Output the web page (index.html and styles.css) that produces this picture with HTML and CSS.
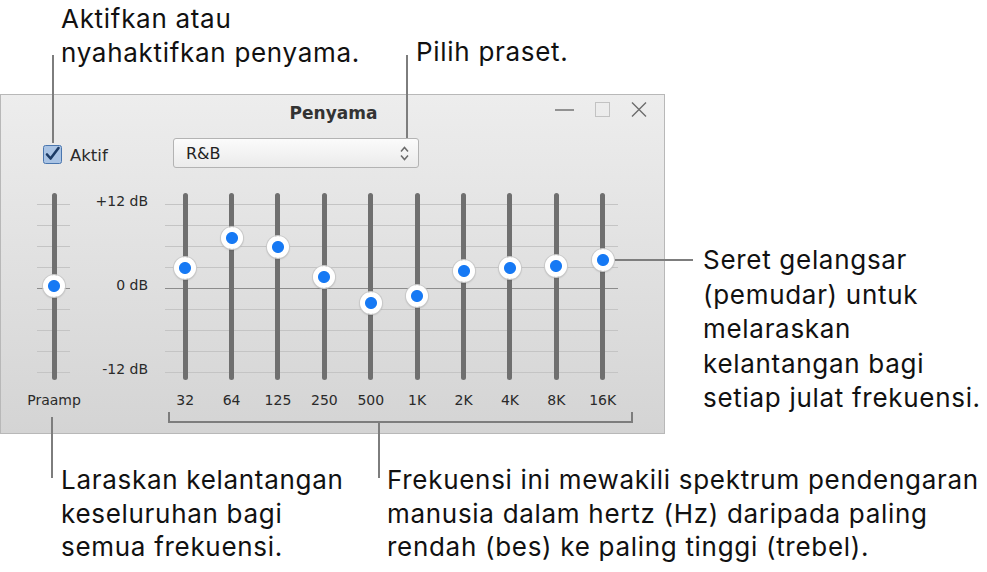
FILE: index.html
```html
<!DOCTYPE html>
<html>

<head>
	<meta charset="utf-8">
	<meta name="viewport" content="width=device-width, initial-scale=1.0">
	<title>Penyama</title>
	<link rel="stylesheet" href="styles.css">
</head>

<body>
	<div class="stage">
		<div class="window">
			<div class="titlebar">
				<span></span>
				<h1>Penyama</h1>
				<div class="controls">
					<svg width="19" height="15" viewBox="0 0 19 15"><path d="M0 8h19" stroke="#6c6c6c" stroke-width="1.4"/></svg>
					<svg width="15" height="15" viewBox="0 0 15 15"><rect x="0.5" y="0.5" width="14" height="14" fill="none" stroke="#c2c2c2"/></svg>
					<svg width="16" height="15" viewBox="0 0 16 15"><path d="M1 0.5l14 14M15 0.5l-14 14" stroke="#6c6c6c" stroke-width="1.4"/></svg>
				</div>
			</div>

			<div class="toolbar">
				<label class="enable">
					<svg width="19" height="19" viewBox="0 0 19 19">
						<rect x="0.5" y="0.5" width="18" height="18" rx="2" fill="#a9c3e4" stroke="#4a76ae"/>
						<path d="M4 9.5l3.6 4L15.5 3" fill="none" stroke="#1c3b66" stroke-width="2.6" stroke-linecap="round" stroke-linejoin="round"/>
					</svg>
					<span>Aktif</span>
				</label>
				<div class="select">
					<span>R&amp;B</span>
					<svg width="9" height="15" viewBox="0 0 9 15"><path d="M1 5.5l3.5-4 3.5 4M1 9.5l3.5 4 3.5-4" fill="none" stroke="#6a6a6a" stroke-width="1.5"/></svg>
				</div>
			</div>

			<div class="eq">
				<div class="band preamp">
					<div class="rail"><span class="knob" style="top: 82px"></span></div>
					<span class="freq">Praamp</span>
				</div>
				<div class="scale">
					<span>+12 dB</span>
					<span>0 dB</span>
					<span>-12 dB</span>
				</div>
				<div class="bands">
					<div class="band">
						<div class="rail"><span class="knob" style="top: 64px"></span></div>
						<span class="freq">32</span>
					</div>
					<div class="band">
						<div class="rail"><span class="knob" style="top: 34px"></span></div>
						<span class="freq">64</span>
					</div>
					<div class="band">
						<div class="rail"><span class="knob" style="top: 43px"></span></div>
						<span class="freq">125</span>
					</div>
					<div class="band">
						<div class="rail"><span class="knob" style="top: 73px"></span></div>
						<span class="freq">250</span>
					</div>
					<div class="band">
						<div class="rail"><span class="knob" style="top: 99px"></span></div>
						<span class="freq">500</span>
					</div>
					<div class="band">
						<div class="rail"><span class="knob" style="top: 92px"></span></div>
						<span class="freq">1K</span>
					</div>
					<div class="band">
						<div class="rail"><span class="knob" style="top: 67px"></span></div>
						<span class="freq">2K</span>
					</div>
					<div class="band">
						<div class="rail"><span class="knob" style="top: 64px"></span></div>
						<span class="freq">4K</span>
					</div>
					<div class="band">
						<div class="rail"><span class="knob" style="top: 62px"></span></div>
						<span class="freq">8K</span>
					</div>
					<div class="band">
						<div class="rail"><span class="knob" style="top: 56px"></span></div>
						<span class="freq">16K</span>
					</div>
				</div>
			</div>
		</div>

		<!-- callouts -->
		<p class="note note-enable">Aktifkan atau<br>nyahaktifkan penyama.</p>
		<p class="note note-preset">Pilih praset.</p>
		<p class="note note-drag">Seret gelangsar<br>(pemudar) untuk<br>melaraskan<br>kelantangan bagi<br>setiap julat frekuensi.</p>
		<p class="note note-preamp">Laraskan kelantangan<br>keseluruhan bagi<br>semua frekuensi.</p>
		<p class="note note-freq">Frekuensi ini mewakili spektrum pendengaran<br>manusia dalam hertz (Hz) daripada paling<br>rendah (bes) ke paling tinggi (trebel).</p>

		<span class="line line-enable"></span>
		<span class="line line-preset"></span>
		<span class="line line-drag"></span>
		<span class="line line-preamp"></span>
		<span class="bracket"></span>
		<span class="line line-freq"></span>
	</div>
</body>

</html>
```

FILE: styles.css
```css
* {
	margin: 0;
	padding: 0;
	box-sizing: border-box;
}

body {
	background: #fff;
	font-family: "DejaVu Sans", sans-serif;
}

.stage {
	position: relative;
	width: 987px;
	height: 572px;
	padding-top: 94px;
	overflow: hidden;
}

/* window */

.window {
	width: 665px;
	height: 340px;
	border: 1px solid #b8b8b8;
	background: linear-gradient(#ededed, #d4d4d4);
	color: #2a2a2a;
}

.titlebar {
	height: 36px;
	display: grid;
	grid-template-columns: 1fr auto 1fr;
	align-items: center;
}

.titlebar h1 {
	font-size: 17px;
	font-weight: 700;
	color: #333;
	padding-left: 2px;
}

.controls {
	justify-self: end;
	align-self: start;
	display: flex;
	gap: 21px;
	padding-top: 7px;
	padding-right: 17px;
}

.toolbar {
	display: flex;
	align-items: center;
	height: 30px;
	margin-top: 7px;
	padding-left: 42px;
}

.enable {
	width: 130px;
	display: flex;
	align-items: center;
	gap: 8px;
	font-size: 16.5px;
	padding-top: 2px;
}

.enable span {
	padding-top: 2px;
}

.select {
	width: 246px;
	height: 30px;
	border: 1px solid #b3b3b3;
	border-radius: 3px;
	background: linear-gradient(#fbfbfb, #ebebeb);
	display: flex;
	align-items: center;
	justify-content: space-between;
	padding: 0 9px 0 12px;
	font-size: 16px;
	color: #222;
}

/* sliders */

.eq {
	display: flex;
	margin-top: 25px;
	padding-left: 36px;
}

.band {
	flex: 0 0 46.4px;
	min-width: 0;
	display: flex;
	flex-direction: column;
	align-items: center;
}

.preamp {
	flex-basis: 34px;
}

.rail {
	position: relative;
	width: 100%;
	height: 187px;
	display: flex;
	justify-content: center;
}

.rail::before {
	content: '';
	width: 5px;
	border-radius: 3px;
	background: #6f6f6f;
}

.preamp .rail {
	background:
		linear-gradient(#8c8c8c, #8c8c8c) 0 95px / 33px 1px no-repeat,
		repeating-linear-gradient(transparent 0 11px, #c4c4c4 11px 12px, transparent 12px 21px) 0 0 / 33px 187px no-repeat;
}

.knob {
	position: absolute;
	left: 50%;
	width: 22px;
	height: 22px;
	margin-left: -11px;
	border-radius: 50%;
	background: radial-gradient(circle, #1679f4 0 5.5px, #fff 6.5px);
	box-shadow: 0 0 0 1px #c9c9c9, 0 1px 2px rgba(0, 0, 0, .25);
}

.freq {
	margin-top: 12px;
	font-size: 14px;
	line-height: 17px;
	white-space: nowrap;
}

.scale {
	flex: 0 0 91px;
	height: 187px;
	display: flex;
	flex-direction: column;
	justify-content: space-between;
	align-items: flex-end;
	padding: 0 14px 3px 0;
	font-size: 14px;
	line-height: 16px;
}

.bands {
	display: flex;
	background:
		linear-gradient(#8c8c8c, #8c8c8c) 3px 95px / 453px 1px no-repeat,
		repeating-linear-gradient(transparent 0 11px, #c4c4c4 11px 12px, transparent 12px 21px) 3px 0 / 453px 187px no-repeat;
}

/* callouts */

.note {
	position: absolute;
	font-family: Inter, sans-serif;
	font-size: 26px;
	letter-spacing: 0.7px;
	line-height: 34px;
	color: #111;
	white-space: nowrap;
}

.note-enable {
	left: 61px;
	top: 2px;
}

.note-preset {
	left: 416px;
	top: 35px;
}

.note-drag {
	left: 703px;
	top: 243px;
	line-height: 34.5px;
}

.note-preamp {
	left: 61px;
	top: 463px;
	line-height: 33.5px;
}

.note-freq {
	left: 387px;
	top: 463px;
	line-height: 33.5px;
}

.line {
	position: absolute;
	background: #7d7d7d;
	width: 2px;
}

.line-enable {
	left: 52px;
	top: 55px;
	height: 88px;
}

.line-preset {
	left: 406px;
	top: 55px;
	height: 83px;
}

.line-drag {
	left: 615px;
	top: 259px;
	width: 78px;
	height: 2px;
}

.line-preamp {
	left: 51px;
	top: 417px;
	height: 61px;
}

.line-freq {
	left: 378px;
	top: 422px;
	height: 56px;
}

.bracket {
	position: absolute;
	left: 168px;
	top: 412px;
	width: 465px;
	height: 11px;
	border: 2px solid #7d7d7d;
	border-top: 0;
}
```
